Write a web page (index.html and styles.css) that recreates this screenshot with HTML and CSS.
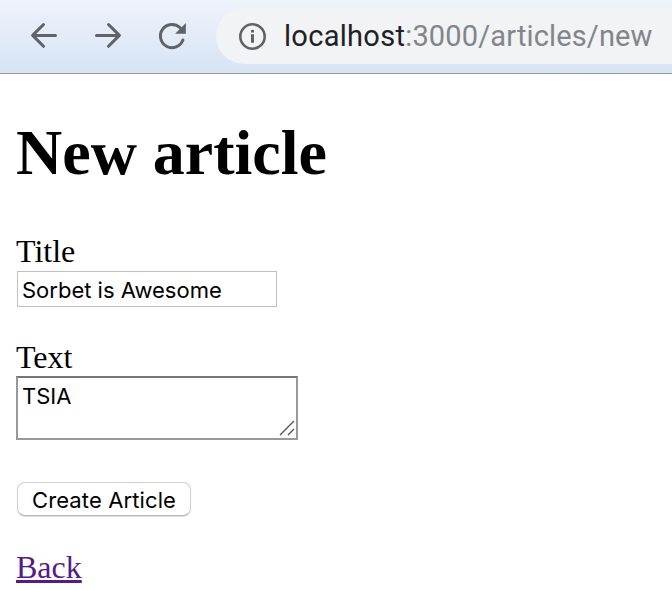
FILE: index.html
```html
<!DOCTYPE html>
<html lang="en">
<head>
<meta charset="utf-8">
<title>New article</title>
<link rel="stylesheet" href="styles.css">
</head>
<body>
<header class="toolbar">
  <svg class="nav-icon" viewBox="0 0 32 32"><path d="M27.500 15.400H5M15.500 4.500L4.600 15.400l10.900 10.900"/></svg>
  <svg class="nav-icon" viewBox="0 0 32 32"><path d="M4.500 15.400H27M16.500 4.500l10.900 10.900-10.900 10.900"/></svg>
  <svg class="nav-icon" viewBox="0 0 32 32"><path d="M26.900 20A11.600 11.600 0 1 1 24.200 7.800"/><path class="solid" d="M29.900 3v10.800H19.100z"/></svg>
  <div class="address">
    <svg class="info-icon" viewBox="0 0 28 28"><circle cx="14.500" cy="14.500" r="12.200"/><path class="mark" d="M14.500 12.300V20.800M14.500 8v2.500"/></svg>
    <span class="url"><span class="host">localhost</span>:3000/articles/new</span>
  </div>
</header>
<main class="page">
  <h1>New article</h1>
  <form>
    <div class="field">
      <label for="title">Title</label>
      <input id="title" class="title-input" type="text" value="Sorbet is Awesome">
    </div>
    <div class="field">
      <label for="text">Text</label>
      <div class="text-box">
        <textarea id="text" class="text-input">TSIA</textarea>
        <svg class="grip" viewBox="0 0 16 16"><path d="M1 15L15 1M9 15l6-6"/></svg>
      </div>
    </div>
    <button type="button" class="submit">Create Article</button>
  </form>
  <a class="back" href="#">Back</a>
</main>
</body>
</html>
```

FILE: styles.css
```css
* { box-sizing: border-box; }
body {
  margin: 0;
  background: #fff;
  color: #000;
  font: 32px/36px "Liberation Serif", serif;
  overflow: hidden;
}
.toolbar {
  display: flex;
  align-items: center;
  height: 74px;
  padding: 0 0 1px 28px;
  background: linear-gradient(#eff3fc, #d7e4f4);
  border-bottom: 1px solid #929ba6;
}
.nav-icon {
  flex: none;
  width: 32px;
  height: 32px;
  margin-right: 32px;
  fill: none;
  stroke: #5f6368;
  stroke-width: 3;
  stroke-linecap: round;
  stroke-linejoin: round;
}
.nav-icon .solid { fill: #5f6368; stroke: none; }
.address {
  flex: 1;
  display: flex;
  align-items: center;
  height: 56px;
  margin-left: -4px;
  padding-left: 22px;
  background: #f1f3f4;
  border-radius: 28px 0 0 28px;
}
.info-icon {
  flex: none;
  width: 28px;
  height: 28px;
  margin-right: 18px;
  fill: none;
  stroke: #5f6368;
  stroke-width: 2.6;
}
.info-icon .mark { stroke-width: 3; }
.url {
  color: #80868b;
  font: 29px/34px Roboto, sans-serif;
  letter-spacing: 0.14px;
  white-space: nowrap;
}
.host { color: #202124; letter-spacing: 0.3px; }
.page { padding: 42px 16px 0; }
h1 { margin: 0 0 43px; font-size: 64px; line-height: 74px; }
.field { margin-bottom: 32px; }
label { display: block; height: 38px; }
.title-input, .text-input, .submit {
  display: block;
  color: #000;
  font: 22px/26px Inter, sans-serif;
  background: #fff;
}
.title-input {
  width: 260px;
  height: 36px;
  margin-left: 1px;
  padding: 2px 4px 0;
  border: 1px solid #c0c0c0;
}
.text-box { position: relative; width: 282px; margin-top: -1px; }
.text-input {
  width: 282px;
  height: 64px;
  padding: 5px 4px;
  border: 2px solid #999;
  border-top-color: #767676;
  resize: none;
  overflow: hidden;
}
.grip {
  position: absolute;
  right: 3px;
  bottom: 4px;
  width: 16px;
  height: 16px;
  fill: none;
  stroke: #555;
  stroke-width: 1.4;
}
.submit {
  width: 174px;
  height: 34px;
  margin: 42px 0 33px 1px;
  padding: 2px 0 0;
  letter-spacing: 0.12px;
  border: 1px solid #d0d0d0;
  border-bottom-color: #b8b8b8;
  border-radius: 8px;
  box-shadow: 0 1px 1px #ddd;
}
.back { color: #551a8b; }
```
